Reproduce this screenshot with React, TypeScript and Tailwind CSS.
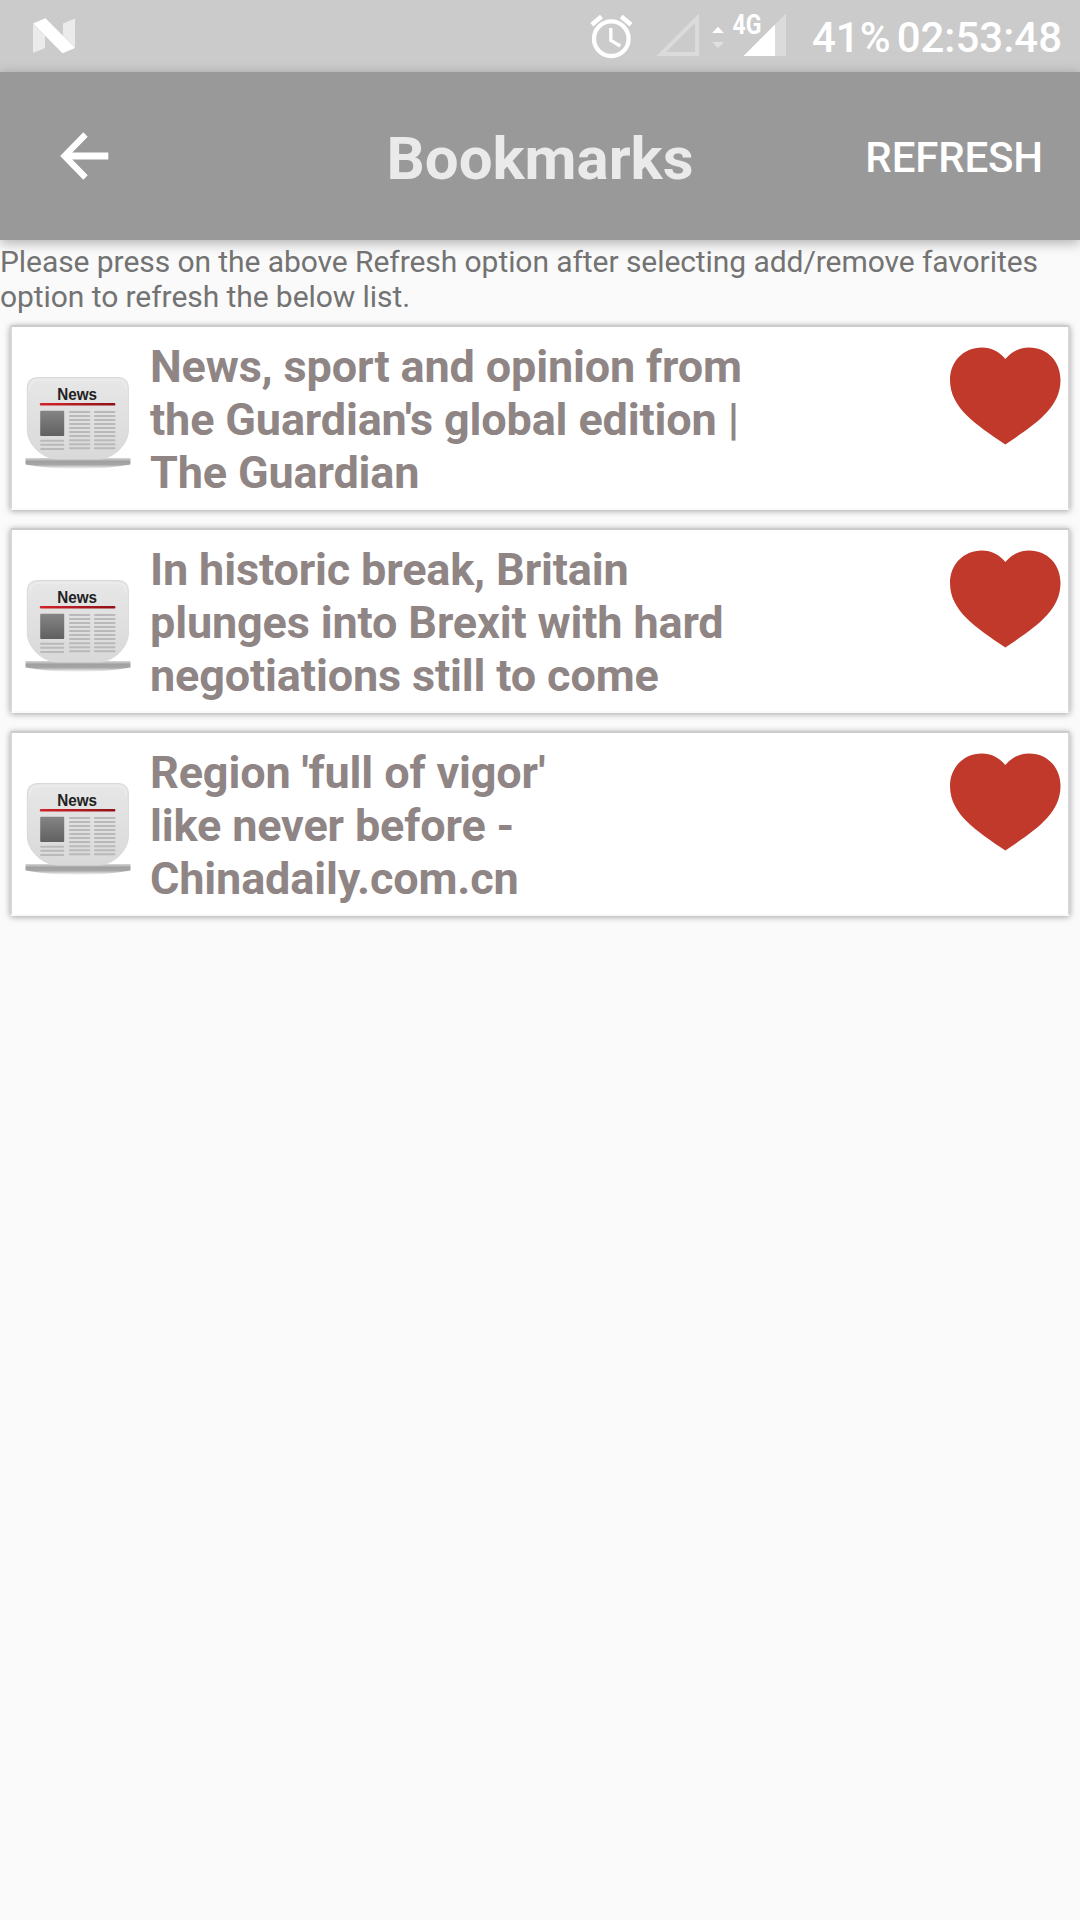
import React from 'react';

const bookmarks = [
  "News, sport and opinion from\nthe Guardian's global edition |\nThe Guardian",
  'In historic break, Britain\nplunges into Brexit with hard\nnegotiations still to come',
  "Region 'full of vigor'\nlike never before -\nChinadaily.com.cn",
];

const rows = [0, 1, 2, 3, 4, 5, 6, 7, 8, 9];

function StatusBar() {
  return (
    <div className="h-[72px] flex items-center justify-between pl-8 pr-[18px] bg-[#cbcbcb] text-white">
      <svg className="w-11 h-[72px]" viewBox="32 0 44 72" fill="#fff">
        <path d="M33 24L45 36V48L33 53Z" opacity=".62" />
        <path d="M63 23.5L75 18.5V48L63 36Z" opacity=".62" />
        <path d="M33 23.5L45.5 18.3L75 48L62.5 53.3Z" />
      </svg>
      <div className="flex items-center">
        <svg className="w-[200px] h-[72px] mr-6" viewBox="588 0 200 72" fill="#fff">
          <circle cx="611.3" cy="38.7" r="17.3" fill="none" stroke="#fff" strokeWidth="4.3" />
          <path d="M610.8 28V40.3L620.3 46" fill="none" stroke="#fff" strokeWidth="3.3" />
          <path d="M591.8 24.8L601.5 16.5M621.2 16.5L631 24.8" fill="none" stroke="#fff" strokeWidth="4.6" />
          <path d="M656.5 56H699V13.5ZM666 52H695V23Z" fillRule="evenodd" opacity=".32" />
          <path d="M712.2 33L718 26.8L723.8 33Z" />
          <path d="M712.2 42L718 48.2L723.8 42Z" opacity=".4" />
          <path d="M775 56H786V13.5L775 24.5Z" opacity=".32" />
          <path d="M743.5 56H775V24.5Z" />
          <text x="732.5" y="34" fontSize="27.5" fontWeight="700" textLength="29" lengthAdjust="spacingAndGlyphs" fontFamily="Roboto, sans-serif">4G</text>
        </svg>
        <span className="text-[42px] leading-[49px] font-medium mr-1.5 pt-[2px]">41%</span>
        <span className="text-[42px] leading-[49px] font-medium pt-[2px]">02:53:48</span>
      </div>
    </div>
  );
}

function Toolbar() {
  return (
    <header className="relative h-[168px] grid grid-cols-[1fr_auto_1fr] items-center bg-[#999999] shadow-[0_3px_12px_rgba(0,0,0,0.3)]">
      <button className="justify-self-start ml-[58px]">
        <svg className="w-[54px] h-[54px] blur-[0.6px]" viewBox="58 129 54 54" fill="none" stroke="#fff">
          <path d="M64 156H108.3" strokeWidth="6.8" />
          <path d="M85.5 134.5L64.5 156L85.5 177.5" strokeWidth="6.2" />
          <path d="M61.5 156L67 150.5V161.5Z" fill="#fff" stroke="none" />
        </svg>
      </button>
      <h1 className="text-[60px] leading-[70px] font-bold text-[#eaeaea] pt-[5px]">Bookmarks</h1>
      <button className="justify-self-end mr-[37px] pt-[2px] text-[42px] leading-[49px] font-medium text-white tracking-[-0.15px]">REFRESH</button>
    </header>
  );
}

function NewsIcon() {
  return (
    <svg className="w-[108px] h-24 shrink-0" viewBox="24 374 108 96">
      <defs>
        <linearGradient id="paper" x1="0" y1="0" x2="0" y2="1">
          <stop offset="0" stopColor="#e7e7e7" />
          <stop offset="1" stopColor="#d9d9d9" />
        </linearGradient>
        <linearGradient id="photo" x1="0" y1="0" x2="0" y2="1">
          <stop offset="0" stopColor="#858585" />
          <stop offset="1" stopColor="#606060" />
        </linearGradient>
        <linearGradient id="rule" x1="0" y1="0" x2="1" y2="0">
          <stop offset="0" stopColor="#d3242b" />
          <stop offset="1" stopColor="#8d1216" />
        </linearGradient>
        <linearGradient id="ground" x1="0" y1="0" x2="0" y2="1">
          <stop offset="0" stopColor="#d8d8d8" />
          <stop offset=".3" stopColor="#a0a0a0" />
          <stop offset=".6" stopColor="#a6a6a6" />
          <stop offset="1" stopColor="#ffffff" />
        </linearGradient>
      </defs>
      <path d="M25.5 458H130.5V464.5Q110 468.5 78 469Q46 468.5 25.5 464.5Z" fill="url(#ground)" />
      <path d="M38 377.5H118Q128.4 377.5 128.4 388V430C128.4 444 114 459 98 459H58C42 459 27.3 444 27.3 430V388Q27.3 377.5 38 377.5Z" fill="url(#paper)" stroke="#d9d9d9" strokeWidth="1" />
      <path d="M29.5 390Q29.5 380 39 380H117Q126.3 380 126.3 390" fill="none" stroke="#efefef" strokeWidth="1.2" />
      <text x="57.3" y="400" fontSize="16.2" fontWeight="700" fill="#222" textLength="39.8" lengthAdjust="spacingAndGlyphs" fontFamily="Liberation Sans, Arial, sans-serif">News</text>
      <rect x="39.8" y="403" width="75.6" height="2.5" rx="1" fill="url(#rule)" />
      <rect x="40.2" y="410.8" width="24" height="25.2" rx="1" fill="url(#photo)" />
      <g fill="#b9b9b9">
        {rows.map((i) => (
          <React.Fragment key={i}>
            <rect x="69" y={411 + i * 4.02} width="21.3" height="2" rx=".8" />
            <rect x="94" y={411 + i * 4.02} width="21.5" height="2" rx=".8" />
            {i < 3 && <rect x="40.2" y={439.7 + i * 4.15} width="24" height="2" rx=".8" />}
          </React.Fragment>
        ))}
      </g>
    </svg>
  );
}

function BookmarkCard({ title }: { title: string }) {
  return (
    <li className="h-[185px] flex items-start bg-white border-2 border-t-[#cccccc] border-x-[#d6d6d6] border-b-[#fafafa] rounded-[2px] shadow-[0_1px_6px_rgba(0,0,0,0.35)] pl-3 pr-[7px]">
      <div className="pt-[47px]">
        <NewsIcon />
      </div>
      <h2 className="flex-1 ml-[18px] pt-[13px] text-[45px] leading-[53px] tracking-[-0.15px] font-bold text-[#8f8585] whitespace-pre-line">{title}</h2>
      <svg className="w-[111px] h-[98px] mt-5" viewBox="0 0 111 98" fill="#c0392b">
        <path d="M55.3 12C49 4.5 41.5 .5 32 .5C13 .5 0 15 0 33C0 61 26 77.5 55.3 97.5C85 77.5 110.5 61 110.5 33C110.5 15 98 .5 79 .5C69.5 .5 62 4.5 55.3 12Z" />
      </svg>
    </li>
  );
}

export default function App() {
  return (
    <div className="min-h-[1920px] bg-[#fafafa] font-['Roboto',sans-serif]">
      <StatusBar />
      <Toolbar />
      <p className="relative pt-1 text-[30px] leading-[35px] tracking-[-0.07px] text-[#737373] whitespace-pre-line">
        {'Please press on the above Refresh option after selecting add/remove favorites\noption to refresh the below list.'}
      </p>
      <ul className="flex flex-col gap-[18px] px-2.5 pt-[11px]">
        {bookmarks.map((title) => (
          <BookmarkCard key={title} title={title} />
        ))}
      </ul>
    </div>
  );
}
